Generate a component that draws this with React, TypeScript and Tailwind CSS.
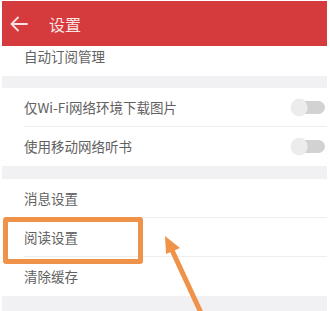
import React from "react";

function Toggle() {
  return (
    <div className="relative w-[34px] h-[17px] flex items-center">
      <div className="absolute right-0 w-[26px] h-[13px] rounded-full bg-[#d2d2d2]" />
      <div className="absolute left-0 w-[17px] h-[17px] rounded-full bg-[#ececec] shadow-[0_0_1px_rgba(0,0,0,0.15)]" />
    </div>
  );
}

function Row({ label, toggle, divider }: { label: string; toggle?: boolean; divider?: boolean }) {
  return (
    <div className="bg-white">
      <div className="h-[38px] flex items-center justify-between pl-[22px] pr-[2px]">
        <span className="text-[13.5px] text-[#616161] leading-[20px]">{label}</span>
        {toggle && <Toggle />}
      </div>
      <div className={divider ? "h-px ml-[22px] bg-[#eeeeee]" : "h-px bg-white"} />
    </div>
  );
}

export default function App() {
  return (
    <div
      className="w-[330px] h-[311px] bg-white pl-[2px] pr-[3px] pt-[1px] overflow-hidden relative"
      style={{ fontFamily: '"Noto Sans CJK SC", "Noto Sans", sans-serif' }}
    >
      <div className="flex flex-col">
        <div className="h-[45px] bg-[#d53b3c] flex items-center pl-[7px]">
          <svg width="20" height="20" viewBox="0 0 20 20" fill="none" stroke="#fbe3e3" strokeWidth="1.8" strokeLinecap="round" strokeLinejoin="round">
            <path d="M18 10H2.5M9 3.5L2.5 10L9 16.5" />
          </svg>
          <span className="ml-[20px] text-[#fbe6e6] text-[16px] leading-[20px]">设置</span>
        </div>
        <div className="h-[30px] bg-white flex pl-[22px]">
          <span className="text-[13.5px] text-[#616161] leading-[20px]">自动订阅管理</span>
        </div>
        <div className="h-[12px] bg-[#f1f1f3]" />
        <Row label="仅Wi-Fi网络环境下载图片" toggle divider />
        <Row label="使用移动网络听书" toggle />
        <div className="h-[13px] bg-[#f1f1f3]" />
        <Row label="消息设置" divider />
        <Row label="阅读设置" divider />
        <Row label="清除缓存" />
        <div className="h-[20px] bg-[#f1f1f3]" />
      </div>

      <div className="absolute left-[3px] top-[217px] w-[140px] h-[47px] border-[5px] border-[#f0934a] rounded-[3px]" />

      <svg className="absolute left-0 top-0" width="330" height="311" viewBox="0 0 330 311">
        <line x1="171" y1="248" x2="202" y2="315" stroke="#f0934a" strokeWidth="5" />
        <polygon points="165,236 180,248 166,254" fill="#f0934a" />
      </svg>
    </div>
  );
}
